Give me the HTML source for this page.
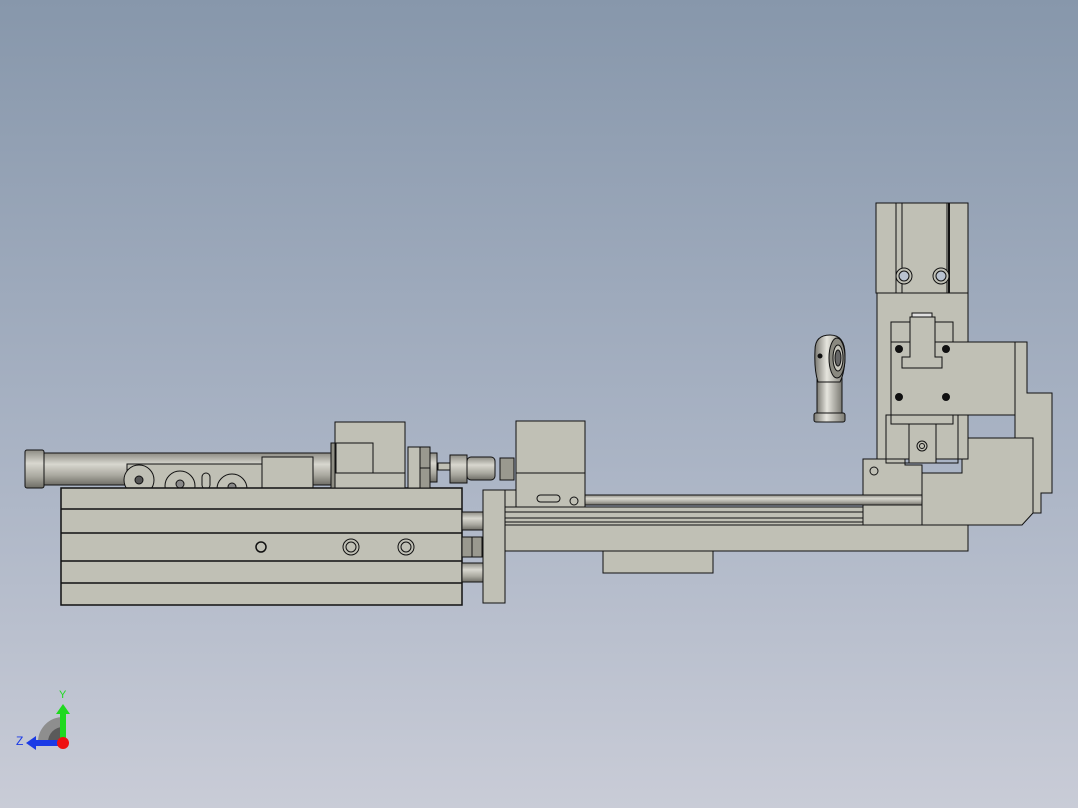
<!DOCTYPE html>
<html><head><meta charset="utf-8"><style>
html,body{margin:0;padding:0;width:1078px;height:808px;overflow:hidden}
body{background:linear-gradient(#8797ab,#a9b3c4 55%,#c9ccd7)}
svg{display:block}
</style></head><body>
<svg width="1078" height="808" viewBox="0 0 1078 808" xmlns="http://www.w3.org/2000/svg">
<defs>
<linearGradient id="cyl" x1="0" y1="0" x2="0" y2="1">
<stop offset="0" stop-color="#8d8c84"/><stop offset="0.35" stop-color="#d8d7cf"/><stop offset="0.7" stop-color="#a9a89f"/><stop offset="1" stop-color="#6e6d66"/></linearGradient>
<linearGradient id="cylv" x1="0" y1="0" x2="1" y2="0">
<stop offset="0" stop-color="#7a7972"/><stop offset="0.4" stop-color="#e6e5de"/><stop offset="1" stop-color="#7a7972"/></linearGradient>
</defs>
<g stroke="#111" stroke-width="1" fill="#c0c0b5">
<!-- left cylinder -->
<rect x="44" y="453" width="290" height="32" fill="url(#cyl)"/>
<rect x="25" y="450" width="19" height="38" rx="2" fill="url(#cyl)"/>
<!-- plate behind -->
<rect x="127" y="464" width="135" height="24"/>
<circle cx="139" cy="480" r="15"/><circle cx="139" cy="480" r="4" fill="#555"/>
<circle cx="180" cy="486" r="15"/><circle cx="180" cy="484" r="4" fill="#888"/>
<rect x="202" y="473" width="8" height="16" rx="4"/>
<circle cx="232" cy="489" r="15"/><circle cx="232" cy="487" r="4" fill="#888"/>
<rect x="262" y="457" width="51" height="31"/>
<!-- base block -->
<rect x="61" y="488" width="401" height="117" stroke-width="1.5"/>
<line x1="61" y1="509" x2="462" y2="509" stroke-width="1.5"/>
<line x1="61" y1="533" x2="462" y2="533" stroke-width="1.5"/>
<line x1="61" y1="561" x2="462" y2="561" stroke-width="1.5"/>
<line x1="61" y1="583" x2="462" y2="583" stroke-width="1.5"/>
<circle cx="261" cy="547" r="5" stroke-width="1.5"/>
<circle cx="351" cy="547" r="8"/><circle cx="351" cy="547" r="5"/>
<circle cx="406" cy="547" r="8"/><circle cx="406" cy="547" r="5"/>
<!-- rods to plate -->
<rect x="462" y="512" width="21" height="18" fill="url(#cyl)"/>
<rect x="462" y="563" width="21" height="19" fill="url(#cyl)"/>
<rect x="462" y="537" width="10" height="20" fill="#9a998f"/><rect x="472" y="537" width="10" height="20" fill="#9a998f"/>
<!-- flange and block -->
<rect x="331" y="443" width="5" height="45" fill="#8f8e84"/>
<rect x="335" y="422" width="70" height="66"/>
<rect x="336" y="443" width="37" height="30" fill="none"/>
<line x1="335" y1="473" x2="405" y2="473"/>
<rect x="408" y="447" width="12" height="41"/>
<rect x="420" y="447" width="10" height="41" fill="#9a998f"/>
<line x1="420" y1="468" x2="430" y2="468"/>
<rect x="430" y="453" width="7" height="29" fill="url(#cyl)"/>
<rect x="438" y="463" width="12" height="7"/>
<rect x="450" y="455" width="17" height="28" fill="url(#cyl)"/>
<rect x="467" y="457" width="28" height="23" rx="4" fill="url(#cyl)"/>
<rect x="500" y="458" width="14" height="22" fill="#9a998f"/>
<!-- vertical plate -->
<rect x="483" y="490" width="22" height="113"/>
<!-- middle block -->
<rect x="516" y="421" width="69" height="94"/>
<line x1="516" y1="473" x2="585" y2="473"/>
<rect x="505" y="490" width="11" height="25"/>
<rect x="537" y="495" width="23" height="7" rx="3.5"/>
<circle cx="574" cy="501" r="4"/>
<!-- rail / base -->
<rect x="505" y="507" width="358" height="18"/>
<line x1="505" y1="512" x2="863" y2="512"/><line x1="505" y1="518" x2="863" y2="518"/><line x1="505" y1="522" x2="863" y2="522"/>
<rect x="505" y="525" width="463" height="26"/>
<rect x="603" y="551" width="110" height="22"/>
<!-- right lower assembly -->
<path d="M1015 342 H1027 V393 H1052 V493 H1041 V513 H1033 V438 H1015 Z"/>
<path d="M962 438 H1033 V513 L1022 525 H922 V473 H962 Z"/>
<path d="M863 459 H905 V465 H922 V525 H863 Z"/>
<circle cx="874" cy="471" r="4"/>
<rect x="585" y="495" width="337" height="10" fill="url(#cyl)"/>
<!-- tower -->
<rect x="877" y="293" width="91" height="166"/>
<rect x="876" y="203" width="92" height="90"/>
<line x1="896" y1="203" x2="896" y2="293"/><line x1="902" y1="203" x2="902" y2="293"/>
<line x1="947" y1="203" x2="947" y2="293"/><line x1="949" y1="203" x2="949" y2="293" stroke-width="2"/>
<circle cx="904" cy="276" r="8"/><circle cx="904" cy="276" r="5" fill="#b9c2cf"/>
<circle cx="941" cy="276" r="8"/><circle cx="941" cy="276" r="5" fill="#b9c2cf"/>
<rect x="886" y="415" width="72" height="48" fill="none"/>
<rect x="909" y="424" width="27" height="39"/>
<circle cx="922" cy="446" r="5"/><circle cx="922" cy="446" r="2.5"/>
<rect x="891" y="322" width="62" height="20"/>
<rect x="891" y="342" width="124" height="73"/>
<rect x="891" y="415" width="62" height="9"/>
<rect x="912" y="313" width="20" height="5" fill="#e0e0e0"/>
<path d="M910 317 H935 V357 H942 V368 H902 V357 H910 Z"/>
<circle cx="899" cy="349" r="3.5" fill="#111"/><circle cx="946" cy="349" r="3.5" fill="#111"/>
<circle cx="899" cy="397" r="3.5" fill="#111"/><circle cx="946" cy="397" r="3.5" fill="#111"/>
<!-- rod end -->
<rect x="817" y="378" width="25" height="37" fill="url(#cylv)"/>
<rect x="814" y="413" width="31" height="9" rx="2" fill="url(#cylv)"/>
<path d="M815 350 Q815 335 830 335 Q845 335 845 355 Q845 372 840 382 H818 Q814 370 815 350 Z" fill="url(#cylv)"/>
<ellipse cx="837" cy="358" rx="8" ry="20" fill="#8a8980"/>
<ellipse cx="838" cy="358" rx="5" ry="13" fill="#c8c7bd"/>
<ellipse cx="838" cy="358" rx="3" ry="8" fill="#666"/>
<circle cx="820" cy="356" r="2" fill="#111"/>
</g>
<!-- triad -->
<path d="M38 742 A25 25 0 0 1 63 717 V742 Z" fill="#8e8e8e"/>
<path d="M48 742 A15 15 0 0 1 63 727 V742 Z" fill="#5a5a5a"/>
<rect x="60" y="712" width="6" height="30" fill="#1fd91f"/>
<path d="M56 714 L63 704 L70 714 Z" fill="#1fd91f"/>
<rect x="34" y="740" width="28" height="6" fill="#1a3ae6"/>
<path d="M36 736 L26 743 L36 750 Z" fill="#1a3ae6"/>
<circle cx="63" cy="743" r="6" fill="#ee1111"/>
<text x="59" y="698" font-family="Liberation Sans, sans-serif" font-size="11" fill="#1fd91f">Y</text>
<text x="16" y="745" font-family="Liberation Sans, sans-serif" font-size="12" fill="#1a3ae6">Z</text>
</svg>
</body></html>
